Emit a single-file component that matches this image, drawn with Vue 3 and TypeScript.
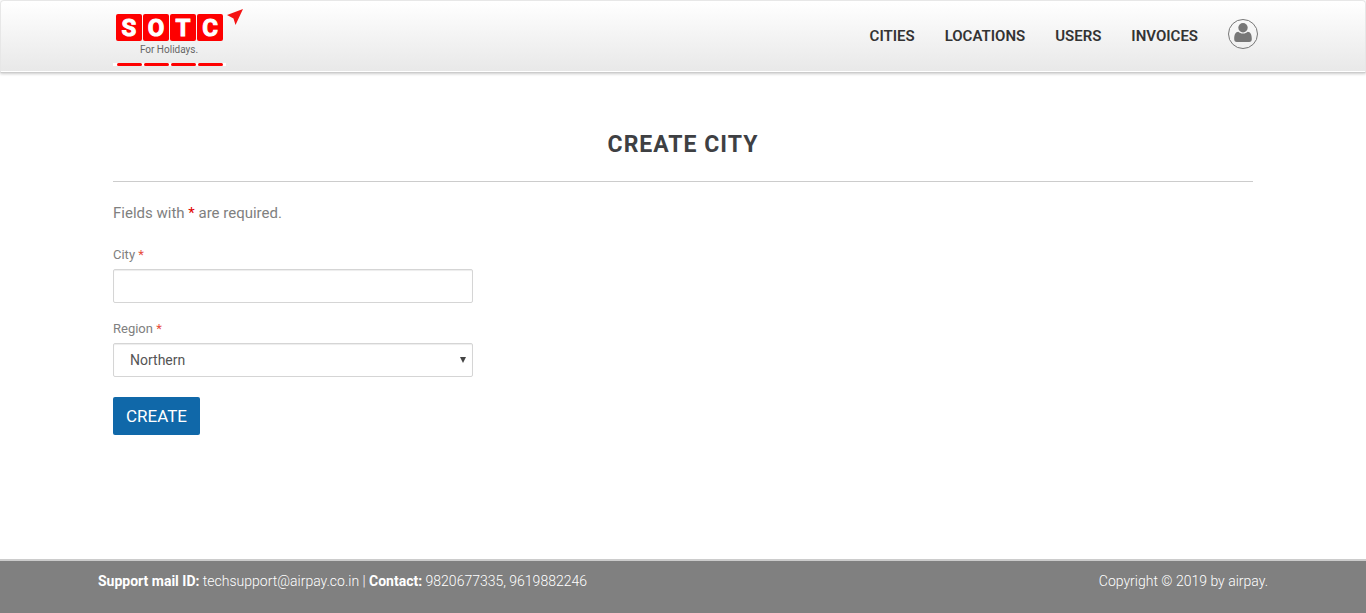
<script setup lang="ts">
import { ref } from 'vue'

interface NavItem {
  label: string
  href: string
}

const navItems: NavItem[] = [
  { label: 'Cities', href: '#cities' },
  { label: 'Locations', href: '#locations' },
  { label: 'Users', href: '#users' },
  { label: 'Invoices', href: '#invoices' },
]

const regions: string[] = ['Northern', 'Southern', 'Eastern', 'Western']

const city = ref('')
const region = ref('Northern')

const logoTiles = [
  { letter: 'S', x: 3 },
  { letter: 'O', x: 30 },
  { letter: 'T', x: 57 },
  { letter: 'C', x: 84 },
]
</script>

<template>
  <div class="page">
    <header class="navbar">
      <div class="container navbar-inner">
        <a class="brand" href="#home" aria-label="SOTC For Holidays">
          <svg class="logo" width="132" height="62" viewBox="0 0 132 62">
            <rect x="0" y="55" width="113" height="3" fill="#fff" />
            <g v-for="tile in logoTiles" :key="tile.letter">
              <rect :x="tile.x" y="6" width="26" height="27" rx="2" fill="#fe0000" />
              <text class="logo-letter" :x="tile.x + 13" y="28" text-anchor="middle">{{ tile.letter }}</text>
              <rect :x="tile.x + 1" y="55" width="25" height="3" rx="1.5" fill="#fe0000" />
            </g>
            <path d="M130 1 L114 7 L120.500 10.500 L122.500 17 Z" fill="#f41414" />
            <text class="logo-tag" x="56" y="45" text-anchor="middle">For Holidays.</text>
          </svg>
        </a>
        <nav class="nav">
          <a v-for="item in navItems" :key="item.label" class="nav-link" :href="item.href">{{ item.label }}</a>
          <a class="avatar" href="#account" aria-label="Account">
            <svg width="18" height="20" viewBox="0 0 18 20" fill="#777">
              <circle cx="9" cy="4.800" r="4.700" />
              <path d="M4.300 8.800 C5.500 10 7 10.600 9 10.600 C11 10.600 12.500 10 13.700 8.800 C16.500 9 17.800 11.500 17.800 16 C17.800 18 17 19 15.200 19 H2.800 C1 19 0.200 18 0.200 16 C0.200 11.500 1.500 9 4.300 8.800 Z" />
            </svg>
          </a>
        </nav>
      </div>
    </header>

    <main class="container content">
      <h1 class="title">Create City</h1>
      <form class="form" @submit.prevent>
        <p class="note">Fields with <span class="star">*</span> are required.</p>
        <div class="field">
          <label class="label" for="city">City <span class="required">*</span></label>
          <input id="city" v-model="city" class="control" type="text" />
        </div>
        <div class="field">
          <label class="label" for="region">Region <span class="required">*</span></label>
          <div class="select-wrap">
            <select id="region" v-model="region" class="control select">
              <option v-for="name in regions" :key="name" :value="name">{{ name }}</option>
            </select>
            <svg class="caret" width="6" height="6" viewBox="0 0 6 6" aria-hidden="true">
              <path d="M0 0 H6 L3 6 Z" fill="#444" />
            </svg>
          </div>
        </div>
        <button class="submit" type="submit">Create</button>
      </form>
    </main>

    <footer class="footer">
      <div class="container footer-inner">
        <p><strong>Support mail ID:</strong> techsupport@airpay.co.in | <strong>Contact:</strong> 9820677335, 9619882246</p>
        <p>Copyright © 2019 by airpay.</p>
      </div>
    </footer>
  </div>
</template>

<style>
body {
  margin: 0;
  background: #fff;
}
</style>

<style scoped>
.page {
  display: flex;
  flex-direction: column;
  min-height: 100vh;
  font-family: Roboto, "Liberation Sans", sans-serif;
  font-size: 14px;
  line-height: 20px;
  color: #777;
}

.page *,
.page *::before {
  box-sizing: border-box;
}

.container {
  width: 100%;
  max-width: 1170px;
  margin: 0 auto;
}

.navbar {
  height: 73px;
  border: 1px solid #e7e7e7;
  border-bottom-color: #ccc;
  border-radius: 4px 4px 0 0;
  background: linear-gradient(#fff 0, #e8e8e8 100%);
  box-shadow: inset 0 -1px 0 #fff, 0 1px 3px rgba(0, 0, 0, 0.2);
}

.navbar-inner {
  display: flex;
  justify-content: space-between;
  padding: 7px 10px 0 15px;
}

.brand,
.logo {
  display: block;
}

.logo-letter {
  font-family: Roboto, sans-serif;
  font-size: 24px;
  font-weight: 700;
  fill: #fff;
  stroke: #fff;
  stroke-width: 1px;
}

.logo-tag {
  font-family: Roboto, sans-serif;
  font-size: 10px;
  fill: #666;
}

.nav {
  display: flex;
  align-items: center;
  gap: 30px;
  height: 56px;
}

.nav-link {
  color: #333;
  font-size: 15px;
  font-weight: 600;
  text-decoration: none;
  text-transform: uppercase;
}

.avatar {
  display: flex;
  align-items: flex-start;
  justify-content: center;
  width: 30px;
  height: 30px;
  margin-bottom: 4px;
  padding-top: 3px;
  border: 1px solid #777;
  border-radius: 50%;
}

.content {
  flex: 1;
  padding: 56px 15px 40px;
}

.title {
  margin: 0 0 21px;
  padding-bottom: 20px;
  border-bottom: 1px solid #ccc;
  color: #3e4043;
  font-size: 23px;
  font-weight: 700;
  line-height: 32px;
  letter-spacing: 1px;
  text-align: center;
  text-transform: uppercase;
}

.form {
  max-width: 360px;
}

.note {
  margin: 0 0 22px;
  color: #808080;
  font-size: 15px;
}

.star {
  color: #e00000;
}

.required {
  color: #e74c3c;
}

.field {
  margin-bottom: 16px;
}

.label {
  display: block;
  margin-bottom: 4px;
  color: #808080;
  font-size: 13px;
}

.control {
  display: block;
  width: 100%;
  height: 34px;
  padding: 6px 12px;
  border: 1px solid #d5d5d5;
  border-radius: 2px;
  background: #fff;
  box-shadow: inset 0 1px 1px rgba(0, 0, 0, 0.075);
  color: #555;
  font: 14px/20px Roboto, "Liberation Sans", sans-serif;
}

.select-wrap {
  position: relative;
}

.select {
  padding: 6px 16px;
  appearance: none;
}

.caret {
  position: absolute;
  top: 14px;
  right: 7px;
  pointer-events: none;
}

.submit {
  display: block;
  height: 38px;
  margin-top: 20px;
  padding: 0 13px;
  border: 0;
  border-radius: 2px;
  background: #1068a9;
  color: #fff;
  font: 17px/24px Roboto, "Liberation Sans", sans-serif;
  text-transform: uppercase;
}

.footer {
  min-height: 54px;
  border-top: 2px solid #ccc;
  background: #808080;
  color: #fff;
  font-weight: 300;
}

.footer strong {
  font-weight: 700;
}

.footer-inner {
  display: flex;
  justify-content: space-between;
  padding: 10px 0;
}

.footer-inner p {
  margin: 0;
}
</style>
